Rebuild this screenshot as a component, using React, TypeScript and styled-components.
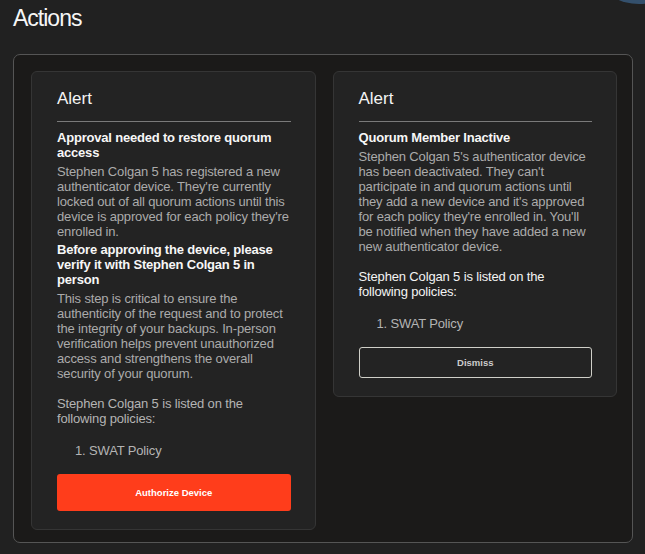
import React from 'react';
import styled, {createGlobalStyle} from "styled-components";

const GlobalStyle = createGlobalStyle`
    html, body {
        margin: 0;
        padding: 0;
        background: #212121;
        font-family: "Liberation Sans", Arial, sans-serif;
    }
`;

type AlertData = {
    sections: {title: string; text: string}[];
    listedBright?: boolean;
    action: {label: string; variant: "primary" | "outline"};
};

const alerts: AlertData[] = [
    {
        sections: [
            {
                title: "Approval needed to restore quorum access",
                text: "Stephen Colgan 5 has registered a new authenticator device. They're currently locked out of all quorum actions until this device is approved for each policy they're enrolled in.",
            },
            {
                title: "Before approving the device, please verify it with Stephen Colgan 5 in person",
                text: "This step is critical to ensure the authenticity of the request and to protect the integrity of your backups. In-person verification helps prevent unauthorized access and strengthens the overall security of your quorum.",
            },
        ],
        action: {label: "Authorize Device", variant: "primary"},
    },
    {
        sections: [
            {
                title: "Quorum Member Inactive",
                text: "Stephen Colgan 5's authenticator device has been deactivated. They can't participate in and quorum actions until they add a new device and it's approved for each policy they're enrolled in. You'll be notified when they have added a new new authenticator device.",
            },
        ],
        listedBright: true,
        action: {label: "Dismiss", variant: "outline"},
    },
];

export default function App() {
    return (
        <Page>
            <GlobalStyle/>
            <Corner/>
            <Title>Actions</Title>
            <Panel>
                {alerts.map((alert, key) => (
                    <Card key={key}>
                        <CardTitle>Alert</CardTitle>
                        <Divider/>
                        {alert.sections.map((section, i) => (
                            <Section key={i} first={i === 0}>
                                <SectionTitle>{section.title}</SectionTitle>
                                <Body>{section.text}</Body>
                            </Section>
                        ))}
                        <Listed bright={alert.listedBright}>
                            Stephen Colgan 5 is listed on the following policies:
                        </Listed>
                        <PolicyList>
                            <li>SWAT Policy</li>
                        </PolicyList>
                        <Button variant={alert.action.variant}>{alert.action.label}</Button>
                    </Card>
                ))}
            </Panel>
        </Page>
    );
}

const Page = styled.div`
    position: relative;
    min-height: 554px;
    padding: 4px 12px 0 13px;
    box-sizing: border-box;
    overflow: hidden;
    color: #f4f4f4;
`;

const Corner = styled.div`
    position: absolute;
    top: -42px;
    right: -30px;
    width: 72px;
    height: 46px;
    border-radius: 50%;
    background: #34506c;
`;

const Title = styled.h1`
    margin: 0;
    font-size: 23px;
    line-height: 28px;
    font-weight: 400;
    letter-spacing: -1px;
    color: #f6f6f6;
`;

const Panel = styled.div`
    margin-top: 22px;
    height: 489px;
    box-sizing: border-box;
    border: 1px solid #555;
    border-radius: 7px;
    background: #1b1a19;
    padding: 16px 15px 16px 17px;
    display: flex;
    align-items: flex-start;
    gap: 17px;
`;

const Card = styled.div`
    flex: 1;
    display: flex;
    flex-direction: column;
    padding: 17px 24px 18px 25px;
    border: 1px solid #353535;
    border-radius: 6px;
    background: #232323;
`;

const CardTitle = styled.h2`
    margin: 0;
    font-size: 17px;
    line-height: 20px;
    font-weight: 400;
    color: #f4f4f4;
`;

const Divider = styled.hr`
    margin: 12px 0 0;
    border: none;
    border-top: 1px solid #7a7a7a;
`;

const Section = styled.div<{first?: boolean}>`
    margin-top: ${p => p.first ? "8px" : "3px"};
`;

const SectionTitle = styled.h3`
    margin: 0;
    font-size: 13px;
    line-height: 15px;
    font-weight: 700;
    letter-spacing: -0.2px;
    color: #f7f7f7;
`;

const Body = styled.p`
    margin: 4px 0 0;
    font-size: 13px;
    line-height: 15px;
    letter-spacing: -0.15px;
    color: #ababab;
`;

const Listed = styled.p<{bright?: boolean}>`
    margin: 15px 0 0;
    font-size: 13px;
    line-height: 15px;
    letter-spacing: -0.15px;
    color: ${p => p.bright ? "#f4f4f4" : "#b4b4b4"};
`;

const PolicyList = styled.ol`
    margin: 17px 0 0;
    padding-left: 32px;
    font-size: 13px;
    line-height: 15px;
    letter-spacing: -0.15px;
    color: #b4b4b4;
`;

const Button = styled.button<{variant: "primary" | "outline"}>`
    margin-top: 16px;
    height: ${p => p.variant === "primary" ? "37px" : "31px"};
    width: 100%;
    border-radius: 3px;
    font-family: "Liberation Sans", Arial, sans-serif;
    font-size: 9.5px;
    font-weight: 700;
    cursor: pointer;
    border: ${p => p.variant === "primary" ? "none" : "1px solid #cfcfc8"};
    background: ${p => p.variant === "primary" ? "#ff3d1b" : "transparent"};
    color: ${p => p.variant === "primary" ? "#fff" : "#cccccc"};
`;
